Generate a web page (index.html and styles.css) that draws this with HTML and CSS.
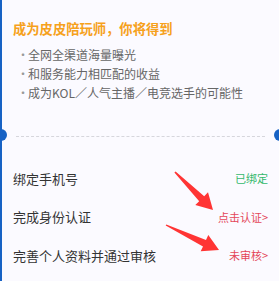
FILE: index.html
```
<!DOCTYPE html>
<html lang="zh-CN">
<head>
  <meta charset="UTF-8" />
  <title>成为皮皮陪玩师</title>
  <link rel="stylesheet" href="styles.css">
</head>
<body>
  <div class="card">
    <div class="intro">
      <h2 class="title">成为皮皮陪玩师，你将得到</h2>
      <ul class="perks">
        <li>全网全渠道海量曝光</li>
        <li>和服务能力相匹配的收益</li>
        <li>成为KOL／人气主播／电竞选手的可能性</li>
      </ul>
    </div>
    <div class="divider">
      <span class="notch notch-left"></span>
      <span class="notch notch-right"></span>
    </div>
    <div class="tasks">
      <div class="task">
        <span class="label">绑定手机号</span>
        <span class="status done">已绑定</span>
      </div>
      <div class="task">
        <span class="label">完成身份认证</span>
        <span class="status todo">点击认证&gt;</span>
      </div>
      <div class="task">
        <span class="label">完善个人资料并通过审核</span>
        <span class="status todo">未审核&gt;</span>
      </div>
    </div>
  </div>

  <svg class="arrows" width="279" height="281" viewBox="0 0 279 281">
    <polygon points="175.6,171.4 204.2,196.2 208,192.3 213,210 195.3,205 199.2,201.2 174.4,172.6" />
    <polygon points="166.3,224.4 206,240 208.3,235.1 219,250 200.7,251.3 203,246.4 165.7,225.6" />
  </svg>
</body>
</html>
```

FILE: styles.css
```
body {
  margin: 0;
  background: #fbfaff;
  font-family: "Noto Sans CJK SC", "Noto Sans", sans-serif;
  overflow: hidden;
}
.card {
  height: 281px;
  border-left: 2px solid #1762c4;
  padding: 0 11px 0 11px;
  box-sizing: border-box;
}
.intro {
  padding-top: 19px;
  height: 136px;
  box-sizing: border-box;
}
.title {
  margin: 0;
  font-size: 13.3px;
  line-height: 20px;
  font-weight: bold;
  color: #f6a11c;
}
.perks {
  list-style: none;
  margin: 6px 0 0;
  padding: 0;
}
.perks li {
  font-size: 12px;
  line-height: 19px;
  color: #666;
  padding-left: 15px;
  position: relative;
}
.perks li::before {
  content: "·";
  position: absolute;
  left: 4px;
  color: #999;
}
.divider {
  height: 0;
  margin: 0 3px;
  border-top: 1px dashed #d6d6dc;
}
.notch {
  position: absolute;
  top: 129px;
  width: 12px;
  height: 12px;
  border-radius: 50%;
  background: #1762c4;
}
.notch-left { left: -5px; }
.notch-right { right: -7px; }
.tasks {
  padding-top: 22px;
}
.task {
  display: flex;
  justify-content: space-between;
  align-items: center;
  height: 38.5px;
}
.label {
  font-size: 13px;
  color: #333;
}
.status {
  font-size: 11px;
}
.done { color: #33b86c; }
.todo { color: #e4475a; }
.arrows {
  position: absolute;
  top: 0;
  left: 0;
  pointer-events: none;
}
.arrows polygon {
  fill: #ff3434;
}
```
